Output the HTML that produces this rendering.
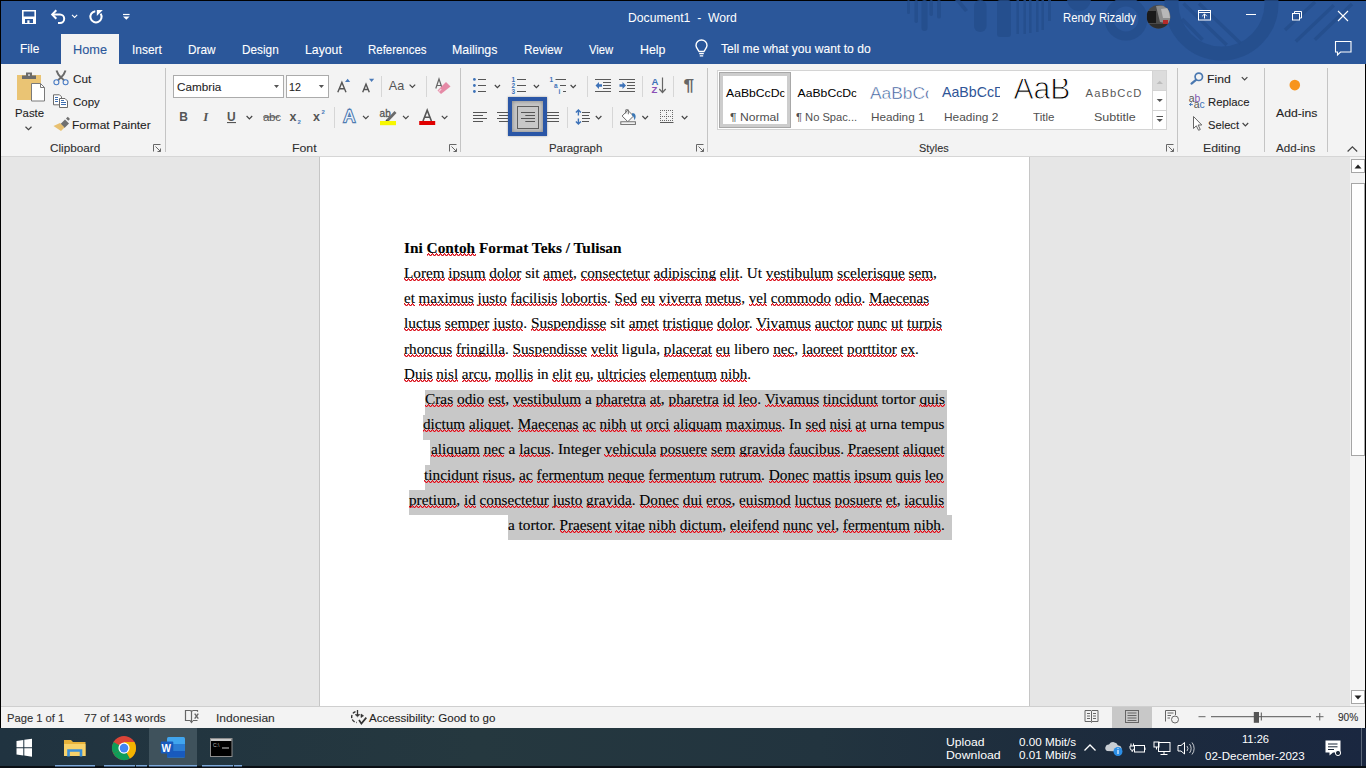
<!DOCTYPE html>
<html><head><meta charset="utf-8">
<style>
*{margin:0;padding:0;box-sizing:border-box}
html,body{width:1366px;height:768px;overflow:hidden;background:#000}
body{position:relative;font-family:"Liberation Sans",sans-serif;font-size:12px;color:#262626}
.a{position:absolute;white-space:nowrap}
#hdr{position:absolute;left:1px;top:1px;width:1365px;height:63px;background:#2b579a;overflow:hidden}
#rib{position:absolute;left:1px;top:64px;width:1364px;height:92px;background:#f3f3f3}
#ribline{position:absolute;left:1px;top:156px;width:1364px;height:1px;background:#d6d6d6}
#docbg{position:absolute;left:1px;top:157px;width:1349px;height:549px;background:#e6e6e6}
#page{position:absolute;left:319px;top:157px;width:711px;height:549px;background:#fff;border-left:1px solid #c6c6c6;border-right:1px solid #c6c6c6}
#vscroll{position:absolute;left:1350px;top:157px;width:15px;height:549px;background:#f3f3f3}
#status{position:absolute;left:1px;top:706px;width:1364px;height:22px;background:#f3f3f3;border-top:1px solid #cfcfcf}
#task{position:absolute;left:0;top:728px;width:1366px;height:40px;background:linear-gradient(90deg,#203340 0%,#25383f 35%,#22343f 60%,#1d2c3d 78%,#1a2740 100%)}
.w{color:#fff}
.dl{position:absolute;font-family:"Liberation Serif",serif;font-size:15px;line-height:20px;white-space:nowrap;color:#000;transform-origin:0 0;-webkit-text-stroke:0.12px #000}
.hb{font-weight:bold}
.lb{position:absolute;font-family:"Liberation Sans",sans-serif;line-height:20px;white-space:nowrap;transform-origin:0 0;-webkit-text-stroke-width:0.1px}
.dl u{text-decoration:none}
</style></head><body>
<div id="hdr"></div>
<div id="rib"></div>
<div id="ribline"></div>
<div id="docbg"></div>
<div id="page"></div>
<div id="vscroll"></div>
<div id="status"></div>
<div id="task"></div>
<!--STRUCT-->
<svg class="a" style="left:0;top:0" width="1366" height="64">
<g fill="#254e8c" fill-opacity="0.85">
 <rect x="907" y="0" width="3" height="14" rx="1.5"/><rect x="914.5" y="0" width="3.5" height="23" rx="1.7"/>
 <rect x="921.5" y="0" width="6" height="31" rx="3"/><rect x="929.5" y="0" width="3.5" height="16" rx="1.7"/>
 <rect x="937" y="0" width="4" height="18.5" rx="2"/>
 <path d="M955 0 L960 0 L968 10 L965 12 Z"/>
 <rect x="974" y="0" width="12.5" height="32" rx="6"/>
 <rect x="997" y="0" width="14" height="37" rx="3"/>
 <rect x="1016.5" y="0" width="2.5" height="34"/><rect x="1023.5" y="0" width="2.5" height="34"/>
 <rect x="1029" y="0" width="2.5" height="33"/><rect x="1036" y="0" width="2.5" height="32"/>
 <rect x="1041.5" y="0" width="2.5" height="30"/><rect x="1048" y="0" width="3" height="21"/>
 <circle cx="1079" cy="-1" r="12"/>
</g>
<g fill="none" stroke="#254e8c" stroke-opacity="0.85">
 <circle cx="1221.5" cy="3.5" r="50" stroke-width="14"/>
 <circle cx="1126" cy="19" r="17" stroke-width="9"/>
 <g stroke-width="3.5">
  <line x1="1182" y1="19" x2="1202.5" y2="39.7"/><line x1="1183.5" y1="3.5" x2="1226.7" y2="44.9"/><line x1="1199" y1="3.5" x2="1240.5" y2="43.2"/>
  <line x1="1295.8" y1="41.5" x2="1333.8" y2="5.2"/><line x1="1314.8" y1="39.7" x2="1352" y2="4"/><line x1="1285" y1="30" x2="1315" y2="2"/>
 </g>
</g>
</svg>
<!-- home tab -->
<div class="a" style="left:61px;top:34px;width:58px;height:30px;background:#f3f3f3"></div>
<!-- font combos -->
<div class="a" style="left:173px;top:75px;width:111px;height:23px;background:#fff;border:1px solid #ababab"></div>
<div class="a" style="left:286px;top:75px;width:43px;height:23px;background:#fff;border:1px solid #ababab"></div>
<!-- focus box on align right -->
<div class="a" style="left:508px;top:97px;width:39px;height:39px;border:4px solid #2a56a6;background:#c6c6c6;box-shadow:0 0 2px rgba(0,0,0,.35)"></div>
<div class="a" style="left:512px;top:101px;width:31px;height:31px;box-shadow:inset 0 0 4px rgba(0,0,0,.35)"></div>
<div class="a" style="left:517px;top:106px;width:22px;height:23px;border:1px solid #5e5e5e;background:#c8c8c8"></div>
<!-- styles gallery -->
<div class="a" style="left:717px;top:70px;width:450px;height:60px;background:#fff;border:1px solid #d4d4d4"></div>
<div class="a" style="left:719px;top:72px;width:72px;height:56px;border:1px solid #a8a8a8;box-shadow:inset 0 0 0 3px #cdcdcd"></div>
<div class="a" style="left:1152px;top:70px;width:15px;height:21px;background:#dcdcdc;border:1px solid #d4d4d4"></div>
<div class="a" style="left:1152px;top:90px;width:15px;height:21px;background:#fff;border:1px solid #d4d4d4"></div>
<div class="a" style="left:1152px;top:110px;width:15px;height:20px;background:#fff;border:1px solid #d4d4d4"></div>
<!-- group separators -->
<div class="a" style="left:165px;top:68px;width:1px;height:84px;background:#c4c4c4"></div>
<div class="a" style="left:460px;top:68px;width:1px;height:84px;background:#c4c4c4"></div>
<div class="a" style="left:707px;top:68px;width:1px;height:84px;background:#c4c4c4"></div>
<div class="a" style="left:1177px;top:68px;width:1px;height:84px;background:#c4c4c4"></div>
<div class="a" style="left:1264px;top:68px;width:1px;height:84px;background:#c4c4c4"></div>
<div class="a" style="left:1327px;top:68px;width:1px;height:84px;background:#c4c4c4"></div>
<!-- small separators -->
<div class="a" style="left:381px;top:76px;width:1px;height:21px;background:#d6d6d6"></div>
<div class="a" style="left:426px;top:76px;width:1px;height:21px;background:#d6d6d6"></div>
<div class="a" style="left:334px;top:107px;width:1px;height:21px;background:#d6d6d6"></div>
<div class="a" style="left:587px;top:76px;width:1px;height:21px;background:#d6d6d6"></div>
<div class="a" style="left:642px;top:76px;width:1px;height:21px;background:#d6d6d6"></div>
<div class="a" style="left:673px;top:76px;width:1px;height:21px;background:#d6d6d6"></div>
<div class="a" style="left:567px;top:107px;width:1px;height:21px;background:#d6d6d6"></div>
<div class="a" style="left:612px;top:107px;width:1px;height:21px;background:#d6d6d6"></div>
<!-- status bar print layout selected -->
<div class="a" style="left:1112px;top:707px;width:40px;height:21px;background:#c8c8c8"></div>
<!-- taskbar word active -->
<div class="a" style="left:149px;top:728px;width:48px;height:38px;background:#3f525c"></div>
<div class="a" style="left:0;top:766px;width:1366px;height:2px;background:#0a0f14"></div>
<div class="a" style="left:1361px;top:728px;width:1px;height:38px;background:#5b6779"></div>

<!--/STRUCT-->
<!--LBL-->
<div class="lb" style="left:628.00px;top:8.00px;font-size:12.25px;color:#ffffff;transform:scaleX(0.9954);-webkit-text-stroke-width:0">Document1 &nbsp;- &nbsp;Word</div>
<div class="lb" style="left:1063.28px;top:8.00px;font-size:12.25px;color:#ffffff;transform:scaleX(0.9244);-webkit-text-stroke-width:0">Rendy Rizaldy</div>
<div class="lb" style="left:19.52px;top:39.30px;font-size:12.25px;color:#ffffff;transform:scaleX(0.9778);">File</div>
<div class="lb" style="left:72.66px;top:39.80px;font-size:12.25px;color:#2b579a;transform:scaleX(1.0419);">Home</div>
<div class="lb" style="left:131.83px;top:39.80px;font-size:12.25px;color:#ffffff;transform:scaleX(0.9733);">Insert</div>
<div class="lb" style="left:188.04px;top:39.80px;font-size:12.25px;color:#ffffff;transform:scaleX(0.9643);">Draw</div>
<div class="lb" style="left:242.04px;top:39.80px;font-size:12.25px;color:#ffffff;transform:scaleX(0.9622);">Design</div>
<div class="lb" style="left:305.00px;top:39.80px;font-size:12.25px;color:#ffffff;transform:scaleX(1.0000);">Layout</div>
<div class="lb" style="left:368.07px;top:39.80px;font-size:12.25px;color:#ffffff;transform:scaleX(0.9344);">References</div>
<div class="lb" style="left:452.39px;top:39.80px;font-size:12.25px;color:#ffffff;transform:scaleX(1.0091);">Mailings</div>
<div class="lb" style="left:523.75px;top:39.80px;font-size:12.25px;color:#ffffff;transform:scaleX(0.9513);">Review</div>
<div class="lb" style="left:588.90px;top:39.80px;font-size:12.25px;color:#ffffff;transform:scaleX(0.9222);">View</div>
<div class="lb" style="left:640.19px;top:39.80px;font-size:12.25px;color:#ffffff;transform:scaleX(1.0125);">Help</div>
<div class="lb" style="left:721.40px;top:39.30px;font-size:12.25px;color:#ffffff;transform:scaleX(0.9901);">Tell me what you want to do</div>
<div class="lb" style="left:14.69px;top:102.50px;font-size:11.25px;color:#1f1f1f;transform:scaleX(1.0111);">Paste</div>
<div class="lb" style="left:72.60px;top:68.70px;font-size:11.0px;color:#1f1f1f;transform:scaleX(1.0647);">Cut</div>
<div class="lb" style="left:72.60px;top:91.60px;font-size:11.0px;color:#1f1f1f;transform:scaleX(1.0423);">Copy</div>
<div class="lb" style="left:71.54px;top:114.70px;font-size:11.25px;color:#1f1f1f;transform:scaleX(1.0575);">Format Painter</div>
<div class="lb" style="left:49.50px;top:137.80px;font-size:11.0px;color:#303030;transform:scaleX(1.0660);">Clipboard</div>
<div class="lb" style="left:176.50px;top:76.90px;font-size:11.75px;color:#1f1f1f;transform:scaleX(0.9977);">Cambria</div>
<div class="lb" style="left:288.89px;top:76.90px;font-size:11.75px;color:#1f1f1f;transform:scaleX(0.9083);">12</div>
<div class="lb" style="left:291.88px;top:137.80px;font-size:11.0px;color:#303030;transform:scaleX(1.1190);">Font</div>
<div class="lb" style="left:549.26px;top:137.80px;font-size:11.0px;color:#303030;transform:scaleX(1.0380);">Paragraph</div>
<div class="lb" style="left:919.11px;top:137.80px;font-size:11.0px;color:#303030;transform:scaleX(0.9897);">Styles</div>
<div class="lb" style="left:1202.58px;top:137.50px;font-size:11.0px;color:#303030;transform:scaleX(1.1219);">Editing</div>
<div class="lb" style="left:1276.20px;top:137.50px;font-size:11.0px;color:#303030;transform:scaleX(1.0541);">Add-ins</div>
<div class="lb" style="left:1275.50px;top:102.70px;font-size:11.0px;color:#1f1f1f;transform:scaleX(1.1108);">Add-ins</div>
<div class="lb" style="left:1207.46px;top:69.00px;font-size:11.75px;color:#1f1f1f;transform:scaleX(1.0381);">Find</div>
<div class="lb" style="left:1207.74px;top:91.90px;font-size:11.75px;color:#1f1f1f;transform:scaleX(0.9643);">Replace</div>
<div class="lb" style="left:1207.53px;top:114.60px;font-size:11.5px;color:#1f1f1f;transform:scaleX(0.9710);">Select</div>
<div class="lb" style="left:730.20px;top:106.50px;font-size:11.0px;color:#505050;transform:scaleX(1.1045);-webkit-text-stroke-width:0">¶ Normal</div>
<div class="lb" style="left:796.20px;top:106.50px;font-size:11.0px;color:#505050;transform:scaleX(1.0133);-webkit-text-stroke-width:0">¶ No Spac...</div>
<div class="lb" style="left:871.43px;top:106.50px;font-size:11.0px;color:#505050;transform:scaleX(1.0653);-webkit-text-stroke-width:0">Heading 1</div>
<div class="lb" style="left:943.52px;top:106.50px;font-size:11.0px;color:#505050;transform:scaleX(1.0837);-webkit-text-stroke-width:0">Heading 2</div>
<div class="lb" style="left:1033.00px;top:106.70px;font-size:11.0px;color:#505050;transform:scaleX(1.0500);-webkit-text-stroke-width:0">Title</div>
<div class="lb" style="left:1093.96px;top:106.70px;font-size:11.0px;color:#505050;transform:scaleX(1.1400);-webkit-text-stroke-width:0">Subtitle</div>
<div class="lb" style="left:6.53px;top:707.50px;font-size:10.5px;color:#303030;transform:scaleX(1.0654);">Page 1 of 1</div>
<div class="lb" style="left:83.51px;top:707.50px;font-size:10.5px;color:#303030;transform:scaleX(1.0919);">77 of 143 words</div>
<div class="lb" style="left:216.16px;top:707.50px;font-size:10.5px;color:#303030;transform:scaleX(1.1440);">Indonesian</div>
<div class="lb" style="left:369.10px;top:707.50px;font-size:10.5px;color:#1f1f1f;transform:scaleX(1.0991);">Accessibility: Good to go</div>
<div class="lb" style="left:1337.60px;top:707.00px;font-size:10.5px;color:#303030;transform:scaleX(0.9619);">90%</div>
<div class="lb" style="left:946.34px;top:732.20px;font-size:11.5px;color:#ffffff;transform:scaleX(1.0571);-webkit-text-stroke-width:0">Upload</div>
<div class="lb" style="left:946.33px;top:745.00px;font-size:11.5px;color:#ffffff;transform:scaleX(1.0680);-webkit-text-stroke-width:0">Download</div>
<div class="lb" style="left:1019.00px;top:732.20px;font-size:11.5px;color:#ffffff;transform:scaleX(1.0161);-webkit-text-stroke-width:0">0.00 Mbit/s</div>
<div class="lb" style="left:1019.00px;top:745.00px;font-size:11.5px;color:#ffffff;transform:scaleX(1.0161);-webkit-text-stroke-width:0">0.01 Mbit/s</div>
<div class="lb" style="left:1241.83px;top:728.80px;font-size:11.5px;color:#ffffff;transform:scaleX(0.9667);-webkit-text-stroke-width:0">11:26</div>
<div class="lb" style="left:1205.20px;top:746.20px;font-size:10.5px;color:#ffffff;transform:scaleX(1.1022);-webkit-text-stroke-width:0">02-December-2023</div>
<!--/LBL-->
<!--DOC-->
<div class="a" style="left:425.0px;top:389.60px;width:522.0px;height:25.13px;background:#c8c8c8"></div>
<div class="a" style="left:423.0px;top:414.73px;width:524.0px;height:25.13px;background:#c8c8c8"></div>
<div class="a" style="left:429.8px;top:439.86px;width:517.2px;height:25.13px;background:#c8c8c8"></div>
<div class="a" style="left:425.0px;top:464.99px;width:522.0px;height:25.13px;background:#c8c8c8"></div>
<div class="a" style="left:409.0px;top:490.12px;width:538.0px;height:25.13px;background:#c8c8c8"></div>
<div class="a" style="left:508.0px;top:515.25px;width:444.0px;height:25.13px;background:#c8c8c8"></div>
<div class="dl hb" style="left:404.48px;top:237.80px;transform:scaleX(1.0212)">Ini <u>Contoh</u> Format Teks / Tulisan</div>
<div class="dl" style="left:403.99px;top:263.00px;transform:scaleX(1.0134)"><u>Lorem</u> <u>ipsum</u> <u>dolor</u> sit <u>amet</u>, <u>consectetur</u> <u>adipiscing</u> <u>elit</u>. Ut <u>vestibulum</u> <u>scelerisque</u> <u>sem</u>,</div>
<div class="dl" style="left:404.00px;top:288.20px;transform:scaleX(1.0027)"><u>et</u> <u>maximus</u> <u>justo</u> <u>facilisis</u> <u>lobortis</u>. <u>Sed</u> <u>eu</u> <u>viverra</u> <u>metus</u>, <u>vel</u> <u>commodo</u> <u>odio</u>. <u>Maecenas</u></div>
<div class="dl" style="left:403.97px;top:313.40px;transform:scaleX(1.0287)"><u>luctus</u> <u>semper</u> <u>justo</u>. <u>Suspendisse</u> sit <u>amet</u> <u>tristique</u> <u>dolor</u>. <u>Vivamus</u> <u>auctor</u> <u>nunc</u> <u>ut</u> <u>turpis</u></div>
<div class="dl" style="left:403.99px;top:338.60px;transform:scaleX(1.0138)"><u>rhoncus</u> <u>fringilla</u>. <u>Suspendisse</u> <u>velit</u> ligula, <u>placerat</u> <u>eu</u> libero <u>nec</u>, <u>laoreet</u> <u>porttitor</u> <u>ex</u>.</div>
<div class="dl" style="left:403.99px;top:363.80px;transform:scaleX(1.0058)"><u>Duis</u> <u>nisl</u> <u>arcu</u>, <u>mollis</u> in <u>elit</u> <u>eu</u>, <u>ultricies</u> <u>elementum</u> <u>nibh</u>.</div>
<div class="dl" style="left:424.98px;top:389.00px;transform:scaleX(1.0237)"><u>Cras</u> <u>odio</u> <u>est</u>, <u>vestibulum</u> a <u>pharetra</u> <u>at</u>, <u>pharetra</u> <u>id</u> <u>leo</u>. <u>Vivamus</u> <u>tincidunt</u> tortor <u>quis</u></div>
<div class="dl" style="left:423.30px;top:414.20px;transform:scaleX(1.0111)"><u>dictum</u> <u>aliquet</u>. <u>Maecenas</u> <u>ac</u> <u>nibh</u> <u>ut</u> <u>orci</u> <u>aliquam</u> <u>maximus</u>. In <u>sed</u> <u>nisi</u> <u>at</u> urna tempus</div>
<div class="dl" style="left:430.60px;top:439.40px;transform:scaleX(1.0126)"><u>aliquam</u> <u>nec</u> a <u>lacus</u>. Integer <u>vehicula</u> <u>posuere</u> <u>sem</u> <u>gravida</u> <u>faucibus</u>. <u>Praesent</u> <u>aliquet</u></div>
<div class="dl" style="left:424.38px;top:464.60px;transform:scaleX(1.0229)"><u>tincidunt</u> <u>risus</u>, <u>ac</u> <u>fermentum</u> <u>neque</u> <u>fermentum</u> <u>rutrum</u>. <u>Donec</u> <u>mattis</u> <u>ipsum</u> <u>quis</u> <u>leo</u></div>
<div class="dl" style="left:409.40px;top:489.80px;transform:scaleX(1.0144)"><u>pretium</u>, <u>id</u> <u>consectetur</u> <u>justo</u> <u>gravida</u>. <u>Donec</u> <u>dui</u> <u>eros</u>, <u>euismod</u> <u>luctus</u> <u>posuere</u> <u>et</u>, <u>iaculis</u></div>
<div class="dl" style="left:508.30px;top:515.00px;transform:scaleX(1.0198)">a tortor. <u>Praesent</u> <u>vitae</u> <u>nibh</u> <u>dictum</u>, <u>eleifend</u> <u>nunc</u> <u>vel</u>, <u>fermentum</u> <u>nibh</u>.</div>
<svg class="a" style="left:0;top:0" width="1366" height="768"><defs><pattern id="zz" patternUnits="userSpaceOnUse" width="4" height="4"><g fill="#d8101a"><rect x="0" y="0" width="1" height="1"/><rect x="1" y="1" width="1" height="1"/><rect x="2" y="2" width="1" height="1"/><rect x="3" y="1" width="1" height="1"/></g><g fill="#e8606a"><rect x="0" y="1" width="1" height="1"/><rect x="1" y="2" width="1" height="1"/><rect x="3" y="2" width="1" height="1"/></g></pattern></defs><g transform="translate(0 253.00)"><rect x="427.0" y="0" width="48.5" height="3" fill="url(#zz)" shape-rendering="crispEdges"/></g><g transform="translate(0 278.00)"><rect x="404.0" y="0" width="40.5" height="3" fill="url(#zz)" shape-rendering="crispEdges"/></g><g transform="translate(0 278.00)"><rect x="448.3" y="0" width="37.2" height="3" fill="url(#zz)" shape-rendering="crispEdges"/></g><g transform="translate(0 278.00)"><rect x="489.3" y="0" width="32.1" height="3" fill="url(#zz)" shape-rendering="crispEdges"/></g><g transform="translate(0 278.00)"><rect x="543.4" y="0" width="29.5" height="3" fill="url(#zz)" shape-rendering="crispEdges"/></g><g transform="translate(0 278.00)"><rect x="580.5" y="0" width="69.2" height="3" fill="url(#zz)" shape-rendering="crispEdges"/></g><g transform="translate(0 278.00)"><rect x="653.5" y="0" width="62.5" height="3" fill="url(#zz)" shape-rendering="crispEdges"/></g><g transform="translate(0 278.00)"><rect x="719.8" y="0" width="19.4" height="3" fill="url(#zz)" shape-rendering="crispEdges"/></g><g transform="translate(0 278.00)"><rect x="765.8" y="0" width="67.6" height="3" fill="url(#zz)" shape-rendering="crispEdges"/></g><g transform="translate(0 278.00)"><rect x="837.2" y="0" width="67.5" height="3" fill="url(#zz)" shape-rendering="crispEdges"/></g><g transform="translate(0 278.00)"><rect x="908.5" y="0" width="24.5" height="3" fill="url(#zz)" shape-rendering="crispEdges"/></g><g transform="translate(0 303.00)"><rect x="404.0" y="0" width="10.9" height="3" fill="url(#zz)" shape-rendering="crispEdges"/></g><g transform="translate(0 303.00)"><rect x="418.6" y="0" width="55.1" height="3" fill="url(#zz)" shape-rendering="crispEdges"/></g><g transform="translate(0 303.00)"><rect x="477.5" y="0" width="29.3" height="3" fill="url(#zz)" shape-rendering="crispEdges"/></g><g transform="translate(0 303.00)"><rect x="510.6" y="0" width="46.8" height="3" fill="url(#zz)" shape-rendering="crispEdges"/></g><g transform="translate(0 303.00)"><rect x="561.1" y="0" width="46.0" height="3" fill="url(#zz)" shape-rendering="crispEdges"/></g><g transform="translate(0 303.00)"><rect x="614.6" y="0" width="22.6" height="3" fill="url(#zz)" shape-rendering="crispEdges"/></g><g transform="translate(0 303.00)"><rect x="640.9" y="0" width="14.2" height="3" fill="url(#zz)" shape-rendering="crispEdges"/></g><g transform="translate(0 303.00)"><rect x="658.9" y="0" width="42.6" height="3" fill="url(#zz)" shape-rendering="crispEdges"/></g><g transform="translate(0 303.00)"><rect x="705.2" y="0" width="35.9" height="3" fill="url(#zz)" shape-rendering="crispEdges"/></g><g transform="translate(0 303.00)"><rect x="748.7" y="0" width="18.4" height="3" fill="url(#zz)" shape-rendering="crispEdges"/></g><g transform="translate(0 303.00)"><rect x="770.8" y="0" width="60.2" height="3" fill="url(#zz)" shape-rendering="crispEdges"/></g><g transform="translate(0 303.00)"><rect x="834.8" y="0" width="26.7" height="3" fill="url(#zz)" shape-rendering="crispEdges"/></g><g transform="translate(0 303.00)"><rect x="869.0" y="0" width="60.1" height="3" fill="url(#zz)" shape-rendering="crispEdges"/></g><g transform="translate(0 328.00)"><rect x="404.0" y="0" width="36.9" height="3" fill="url(#zz)" shape-rendering="crispEdges"/></g><g transform="translate(0 328.00)"><rect x="444.7" y="0" width="44.6" height="3" fill="url(#zz)" shape-rendering="crispEdges"/></g><g transform="translate(0 328.00)"><rect x="493.1" y="0" width="30.0" height="3" fill="url(#zz)" shape-rendering="crispEdges"/></g><g transform="translate(0 328.00)"><rect x="530.9" y="0" width="75.4" height="3" fill="url(#zz)" shape-rendering="crispEdges"/></g><g transform="translate(0 328.00)"><rect x="628.6" y="0" width="30.0" height="3" fill="url(#zz)" shape-rendering="crispEdges"/></g><g transform="translate(0 328.00)"><rect x="662.5" y="0" width="50.6" height="3" fill="url(#zz)" shape-rendering="crispEdges"/></g><g transform="translate(0 328.00)"><rect x="716.9" y="0" width="31.7" height="3" fill="url(#zz)" shape-rendering="crispEdges"/></g><g transform="translate(0 328.00)"><rect x="756.1" y="0" width="54.8" height="3" fill="url(#zz)" shape-rendering="crispEdges"/></g><g transform="translate(0 328.00)"><rect x="814.7" y="0" width="38.6" height="3" fill="url(#zz)" shape-rendering="crispEdges"/></g><g transform="translate(0 328.00)"><rect x="857.2" y="0" width="30.0" height="3" fill="url(#zz)" shape-rendering="crispEdges"/></g><g transform="translate(0 328.00)"><rect x="891.0" y="0" width="12.0" height="3" fill="url(#zz)" shape-rendering="crispEdges"/></g><g transform="translate(0 328.00)"><rect x="906.9" y="0" width="35.2" height="3" fill="url(#zz)" shape-rendering="crispEdges"/></g><g transform="translate(0 354.00)"><rect x="404.0" y="0" width="48.2" height="3" fill="url(#zz)" shape-rendering="crispEdges"/></g><g transform="translate(0 354.00)"><rect x="455.9" y="0" width="49.0" height="3" fill="url(#zz)" shape-rendering="crispEdges"/></g><g transform="translate(0 354.00)"><rect x="512.5" y="0" width="74.4" height="3" fill="url(#zz)" shape-rendering="crispEdges"/></g><g transform="translate(0 354.00)"><rect x="590.7" y="0" width="27.0" height="3" fill="url(#zz)" shape-rendering="crispEdges"/></g><g transform="translate(0 354.00)"><rect x="663.8" y="0" width="48.1" height="3" fill="url(#zz)" shape-rendering="crispEdges"/></g><g transform="translate(0 354.00)"><rect x="715.7" y="0" width="14.4" height="3" fill="url(#zz)" shape-rendering="crispEdges"/></g><g transform="translate(0 354.00)"><rect x="773.2" y="0" width="21.1" height="3" fill="url(#zz)" shape-rendering="crispEdges"/></g><g transform="translate(0 354.00)"><rect x="801.9" y="0" width="41.4" height="3" fill="url(#zz)" shape-rendering="crispEdges"/></g><g transform="translate(0 354.00)"><rect x="847.1" y="0" width="49.9" height="3" fill="url(#zz)" shape-rendering="crispEdges"/></g><g transform="translate(0 354.00)"><rect x="900.7" y="0" width="14.4" height="3" fill="url(#zz)" shape-rendering="crispEdges"/></g><g transform="translate(0 379.00)"><rect x="404.0" y="0" width="28.5" height="3" fill="url(#zz)" shape-rendering="crispEdges"/></g><g transform="translate(0 379.00)"><rect x="436.3" y="0" width="21.8" height="3" fill="url(#zz)" shape-rendering="crispEdges"/></g><g transform="translate(0 379.00)"><rect x="461.8" y="0" width="26.0" height="3" fill="url(#zz)" shape-rendering="crispEdges"/></g><g transform="translate(0 379.00)"><rect x="495.4" y="0" width="37.7" height="3" fill="url(#zz)" shape-rendering="crispEdges"/></g><g transform="translate(0 379.00)"><rect x="552.4" y="0" width="19.3" height="3" fill="url(#zz)" shape-rendering="crispEdges"/></g><g transform="translate(0 379.00)"><rect x="575.4" y="0" width="14.3" height="3" fill="url(#zz)" shape-rendering="crispEdges"/></g><g transform="translate(0 379.00)"><rect x="597.2" y="0" width="48.6" height="3" fill="url(#zz)" shape-rendering="crispEdges"/></g><g transform="translate(0 379.00)"><rect x="649.6" y="0" width="67.0" height="3" fill="url(#zz)" shape-rendering="crispEdges"/></g><g transform="translate(0 379.00)"><rect x="720.4" y="0" width="26.8" height="3" fill="url(#zz)" shape-rendering="crispEdges"/></g><g transform="translate(0 404.00)"><rect x="425.0" y="0" width="28.2" height="3" fill="url(#zz)" shape-rendering="crispEdges"/></g><g transform="translate(0 404.00)"><rect x="457.0" y="0" width="27.3" height="3" fill="url(#zz)" shape-rendering="crispEdges"/></g><g transform="translate(0 404.00)"><rect x="488.1" y="0" width="17.1" height="3" fill="url(#zz)" shape-rendering="crispEdges"/></g><g transform="translate(0 404.00)"><rect x="512.8" y="0" width="68.3" height="3" fill="url(#zz)" shape-rendering="crispEdges"/></g><g transform="translate(0 404.00)"><rect x="595.6" y="0" width="50.3" height="3" fill="url(#zz)" shape-rendering="crispEdges"/></g><g transform="translate(0 404.00)"><rect x="649.8" y="0" width="11.1" height="3" fill="url(#zz)" shape-rendering="crispEdges"/></g><g transform="translate(0 404.00)"><rect x="668.5" y="0" width="50.3" height="3" fill="url(#zz)" shape-rendering="crispEdges"/></g><g transform="translate(0 404.00)"><rect x="722.7" y="0" width="11.9" height="3" fill="url(#zz)" shape-rendering="crispEdges"/></g><g transform="translate(0 404.00)"><rect x="738.4" y="0" width="18.8" height="3" fill="url(#zz)" shape-rendering="crispEdges"/></g><g transform="translate(0 404.00)"><rect x="764.6" y="0" width="54.5" height="3" fill="url(#zz)" shape-rendering="crispEdges"/></g><g transform="translate(0 404.00)"><rect x="823.0" y="0" width="54.6" height="3" fill="url(#zz)" shape-rendering="crispEdges"/></g><g transform="translate(0 404.00)"><rect x="919.4" y="0" width="25.6" height="3" fill="url(#zz)" shape-rendering="crispEdges"/></g><g transform="translate(0 429.00)"><rect x="423.3" y="0" width="42.1" height="3" fill="url(#zz)" shape-rendering="crispEdges"/></g><g transform="translate(0 429.00)"><rect x="469.2" y="0" width="41.3" height="3" fill="url(#zz)" shape-rendering="crispEdges"/></g><g transform="translate(0 429.00)"><rect x="518.1" y="0" width="60.6" height="3" fill="url(#zz)" shape-rendering="crispEdges"/></g><g transform="translate(0 429.00)"><rect x="582.5" y="0" width="13.5" height="3" fill="url(#zz)" shape-rendering="crispEdges"/></g><g transform="translate(0 429.00)"><rect x="599.8" y="0" width="27.0" height="3" fill="url(#zz)" shape-rendering="crispEdges"/></g><g transform="translate(0 429.00)"><rect x="630.5" y="0" width="11.8" height="3" fill="url(#zz)" shape-rendering="crispEdges"/></g><g transform="translate(0 429.00)"><rect x="646.1" y="0" width="23.6" height="3" fill="url(#zz)" shape-rendering="crispEdges"/></g><g transform="translate(0 429.00)"><rect x="673.5" y="0" width="48.9" height="3" fill="url(#zz)" shape-rendering="crispEdges"/></g><g transform="translate(0 429.00)"><rect x="726.2" y="0" width="55.6" height="3" fill="url(#zz)" shape-rendering="crispEdges"/></g><g transform="translate(0 429.00)"><rect x="805.8" y="0" width="20.2" height="3" fill="url(#zz)" shape-rendering="crispEdges"/></g><g transform="translate(0 429.00)"><rect x="829.8" y="0" width="21.9" height="3" fill="url(#zz)" shape-rendering="crispEdges"/></g><g transform="translate(0 429.00)"><rect x="855.5" y="0" width="10.9" height="3" fill="url(#zz)" shape-rendering="crispEdges"/></g><g transform="translate(0 454.00)"><rect x="430.6" y="0" width="48.9" height="3" fill="url(#zz)" shape-rendering="crispEdges"/></g><g transform="translate(0 454.00)"><rect x="483.3" y="0" width="21.1" height="3" fill="url(#zz)" shape-rendering="crispEdges"/></g><g transform="translate(0 454.00)"><rect x="518.8" y="0" width="31.2" height="3" fill="url(#zz)" shape-rendering="crispEdges"/></g><g transform="translate(0 454.00)"><rect x="604.4" y="0" width="51.5" height="3" fill="url(#zz)" shape-rendering="crispEdges"/></g><g transform="translate(0 454.00)"><rect x="659.6" y="0" width="47.2" height="3" fill="url(#zz)" shape-rendering="crispEdges"/></g><g transform="translate(0 454.00)"><rect x="710.7" y="0" width="24.5" height="3" fill="url(#zz)" shape-rendering="crispEdges"/></g><g transform="translate(0 454.00)"><rect x="739.0" y="0" width="45.6" height="3" fill="url(#zz)" shape-rendering="crispEdges"/></g><g transform="translate(0 454.00)"><rect x="788.3" y="0" width="51.5" height="3" fill="url(#zz)" shape-rendering="crispEdges"/></g><g transform="translate(0 454.00)"><rect x="847.4" y="0" width="51.5" height="3" fill="url(#zz)" shape-rendering="crispEdges"/></g><g transform="translate(0 454.00)"><rect x="902.6" y="0" width="41.3" height="3" fill="url(#zz)" shape-rendering="crispEdges"/></g><g transform="translate(0 480.00)"><rect x="424.4" y="0" width="54.5" height="3" fill="url(#zz)" shape-rendering="crispEdges"/></g><g transform="translate(0 480.00)"><rect x="482.8" y="0" width="29.0" height="3" fill="url(#zz)" shape-rendering="crispEdges"/></g><g transform="translate(0 480.00)"><rect x="519.4" y="0" width="13.6" height="3" fill="url(#zz)" shape-rendering="crispEdges"/></g><g transform="translate(0 480.00)"><rect x="536.9" y="0" width="67.3" height="3" fill="url(#zz)" shape-rendering="crispEdges"/></g><g transform="translate(0 480.00)"><rect x="608.0" y="0" width="36.6" height="3" fill="url(#zz)" shape-rendering="crispEdges"/></g><g transform="translate(0 480.00)"><rect x="648.5" y="0" width="67.3" height="3" fill="url(#zz)" shape-rendering="crispEdges"/></g><g transform="translate(0 480.00)"><rect x="719.7" y="0" width="41.8" height="3" fill="url(#zz)" shape-rendering="crispEdges"/></g><g transform="translate(0 480.00)"><rect x="769.1" y="0" width="40.1" height="3" fill="url(#zz)" shape-rendering="crispEdges"/></g><g transform="translate(0 480.00)"><rect x="813.0" y="0" width="37.5" height="3" fill="url(#zz)" shape-rendering="crispEdges"/></g><g transform="translate(0 480.00)"><rect x="854.4" y="0" width="37.5" height="3" fill="url(#zz)" shape-rendering="crispEdges"/></g><g transform="translate(0 480.00)"><rect x="895.7" y="0" width="25.6" height="3" fill="url(#zz)" shape-rendering="crispEdges"/></g><g transform="translate(0 480.00)"><rect x="925.1" y="0" width="18.7" height="3" fill="url(#zz)" shape-rendering="crispEdges"/></g><g transform="translate(0 505.00)"><rect x="409.4" y="0" width="47.3" height="3" fill="url(#zz)" shape-rendering="crispEdges"/></g><g transform="translate(0 505.00)"><rect x="464.3" y="0" width="11.8" height="3" fill="url(#zz)" shape-rendering="crispEdges"/></g><g transform="translate(0 505.00)"><rect x="480.0" y="0" width="69.3" height="3" fill="url(#zz)" shape-rendering="crispEdges"/></g><g transform="translate(0 505.00)"><rect x="553.1" y="0" width="29.6" height="3" fill="url(#zz)" shape-rendering="crispEdges"/></g><g transform="translate(0 505.00)"><rect x="586.5" y="0" width="45.6" height="3" fill="url(#zz)" shape-rendering="crispEdges"/></g><g transform="translate(0 505.00)"><rect x="639.7" y="0" width="39.7" height="3" fill="url(#zz)" shape-rendering="crispEdges"/></g><g transform="translate(0 505.00)"><rect x="683.2" y="0" width="19.4" height="3" fill="url(#zz)" shape-rendering="crispEdges"/></g><g transform="translate(0 505.00)"><rect x="706.5" y="0" width="25.4" height="3" fill="url(#zz)" shape-rendering="crispEdges"/></g><g transform="translate(0 505.00)"><rect x="739.5" y="0" width="51.6" height="3" fill="url(#zz)" shape-rendering="crispEdges"/></g><g transform="translate(0 505.00)"><rect x="794.8" y="0" width="36.4" height="3" fill="url(#zz)" shape-rendering="crispEdges"/></g><g transform="translate(0 505.00)"><rect x="835.0" y="0" width="47.3" height="3" fill="url(#zz)" shape-rendering="crispEdges"/></g><g transform="translate(0 505.00)"><rect x="886.1" y="0" width="11.0" height="3" fill="url(#zz)" shape-rendering="crispEdges"/></g><g transform="translate(0 505.00)"><rect x="904.7" y="0" width="39.7" height="3" fill="url(#zz)" shape-rendering="crispEdges"/></g><g transform="translate(0 530.00)"><rect x="559.7" y="0" width="51.8" height="3" fill="url(#zz)" shape-rendering="crispEdges"/></g><g transform="translate(0 530.00)"><rect x="615.4" y="0" width="29.7" height="3" fill="url(#zz)" shape-rendering="crispEdges"/></g><g transform="translate(0 530.00)"><rect x="648.9" y="0" width="27.2" height="3" fill="url(#zz)" shape-rendering="crispEdges"/></g><g transform="translate(0 530.00)"><rect x="679.9" y="0" width="42.5" height="3" fill="url(#zz)" shape-rendering="crispEdges"/></g><g transform="translate(0 530.00)"><rect x="730.1" y="0" width="49.3" height="3" fill="url(#zz)" shape-rendering="crispEdges"/></g><g transform="translate(0 530.00)"><rect x="783.2" y="0" width="29.7" height="3" fill="url(#zz)" shape-rendering="crispEdges"/></g><g transform="translate(0 530.00)"><rect x="816.8" y="0" width="18.7" height="3" fill="url(#zz)" shape-rendering="crispEdges"/></g><g transform="translate(0 530.00)"><rect x="843.1" y="0" width="67.1" height="3" fill="url(#zz)" shape-rendering="crispEdges"/></g><g transform="translate(0 530.00)"><rect x="914.0" y="0" width="27.2" height="3" fill="url(#zz)" shape-rendering="crispEdges"/></g></svg>
<!--/DOC-->
<!--ICONS-->
<svg class="a" style="left:0;top:0" width="1366" height="768" viewBox="0 0 1366 768" font-family="Liberation Sans, sans-serif">
<!-- ===== quick access toolbar ===== -->
<g fill="none" stroke="#fff" stroke-width="1.5">
 <!-- save -->
 <path d="M22.8 10.8 H35.2 V23.2 H22.8 Z" stroke-width="1.6"/>
 <!-- undo -->
 <path d="M53 14.5 H60 A4.2 4.2 0 0 1 60 22.9 H58" stroke-width="2"/>
 <path d="M56.3 10.3 L52.2 14.5 L56.3 18.7" stroke-width="2"/>
 <path d="M72 14.8 L74.6 17.4 L77.2 14.8" stroke-width="1.1"/>
 <!-- redo (circular) -->
 <path d="M95.3 11.2 A5.6 5.6 0 1 0 100.6 13.6" stroke-width="2"/>
 <path d="M96.8 10 H102.8 L96.8 16 Z" fill="#fff" stroke="none"/>
</g>
<path d="M22 16.5 H36 V24 H22 Z" fill="#fff"/>
<rect x="25" y="19" width="8" height="4" fill="#2b579a"/>
<rect x="27.3" y="20.3" width="2.2" height="2.7" fill="#fff"/>
<path d="M123 14.5 H129.6" stroke="#fff" stroke-width="1.2"/>
<path d="M123 16.5 L129.6 16.5 L126.3 19.8 Z" fill="#fff"/>
<!-- ===== title right ===== -->
<clipPath id="av"><circle cx="1158.5" cy="16.7" r="11.8"/></clipPath>
<g clip-path="url(#av)">
<rect x="1146" y="4" width="25" height="25" fill="#4a4a4a"/>
<path d="M1156 6 L1166 5 L1171 12 L1171 24 L1160 22 Z" fill="#8c8c8c"/>
<path d="M1161 9 L1168 8 L1170 18 L1163 18 Z" fill="#b8b8b8"/>
<rect x="1147" y="11" width="9" height="12" fill="#1a1a1a"/>
<rect x="1163" y="20" width="5" height="4" fill="#b52a2a"/>
<rect x="1146" y="24" width="25" height="6" fill="#2e2e2e"/>
</g>
<g fill="none" stroke="#fff" stroke-width="1">
 <rect x="1198.5" y="10.5" width="12" height="9.5"/>
 <path d="M1198.5 12.5 H1210.5"/>
 <path d="M1204.5 18.5 V14 M1202.2 16.2 L1204.5 13.9 L1206.8 16.2"/>
 <path d="M1246 14.5 H1256"/>
 <rect x="1292.5" y="13.5" width="7" height="6.5"/>
 <path d="M1294.5 13.5 V11.5 H1301.5 V18 H1299.5"/>
 <path d="M1338 11 L1348 21 M1348 11 L1338 21" stroke-width="1.1"/>
 <path d="M1335.5 41.5 H1351 V52 H1340.5 L1337.5 55 V52 H1335.5 Z" stroke-width="1.1"/>
 <!-- bulb -->
 <path d="M699 51.5 C697.5 49 696 47.5 696 45.5 A5.5 5.5 0 0 1 707 45.5 C707 47.5 705.5 49 704 51.5 Z" stroke-width="1.4"/>
 <path d="M699.2 53.6 H703.8 M699.8 55.8 H703.2" stroke-width="1.3"/>
</g>
<!-- ===== clipboard ===== -->
<rect x="17" y="75" width="24" height="25" fill="#eac474"/>
<rect x="22" y="75.5" width="14" height="3.5" fill="#6b6b6b"/>
<rect x="26" y="72.5" width="6" height="4" fill="#6b6b6b"/>
<circle cx="29" cy="75" r="1" fill="#d8d8d8"/>
<path d="M31.5 83.5 H40.5 L44.5 87.5 V101 H31.5 Z" fill="#fff" stroke="#7a7a7a"/>
<path d="M40.5 83.5 V87.5 H44.5" fill="none" stroke="#7a7a7a"/>
<path d="M25.5 126.8 L28.5 129.6 L31.5 126.8" fill="none" stroke="#444" stroke-width="1.2"/>
<!-- cut -->
<path d="M56.5 70.5 Q58 75 61 77.5 Q63.5 79.5 64 80.5 M65.5 70.5 Q64 75 61 77.5 Q58.5 79.5 58 80.5" fill="none" stroke="#6a6a6a" stroke-width="2"/>
<circle cx="56.4" cy="82.3" r="2.5" fill="none" stroke="#4a7cc4" stroke-width="1.1"/>
<circle cx="65.6" cy="82.3" r="2.5" fill="none" stroke="#4a7cc4" stroke-width="1.1"/>
<!-- copy -->
<path d="M53.5 94.8 H59.5 L61.5 96.8 V104.8 H53.5 Z" fill="#fff" stroke="#6a6a6a"/>
<g fill="#3f6fb0" shape-rendering="crispEdges"><rect x="55" y="97" width="3" height="1"/><rect x="55" y="99" width="3" height="1"/><rect x="55" y="101" width="3" height="1"/></g>
<path d="M59.5 98.5 H65 L67.5 101 V107.5 H59.5 Z" fill="#fff" stroke="#6a6a6a"/>
<g fill="#3f6fb0" shape-rendering="crispEdges"><rect x="61" y="100" width="3" height="1"/><rect x="61" y="102" width="5" height="1"/><rect x="61" y="104" width="5" height="1"/></g>
<!-- format painter -->
<path d="M60.5 124 L65 119.5 L69 123.5 L64.5 128 Z" fill="#707070"/>
<path d="M66 118.5 L67.8 116.8 L70 119 L68.3 120.8 Z" fill="#707070"/>
<path d="M53.5 126 L60 123 L64.5 127.5 L61 131 Z" fill="#e8c070"/>
<!-- dialog launchers -->
<g fill="none" stroke="#666" stroke-width="1">
 <path d="M153.5 151.5 V144.5 H160.5 M155.5 146.5 L160.5 151.5 M157.5 151.5 H160.5 V148.5"/>
 <path d="M449.5 151.5 V144.5 H456.5 M451.5 146.5 L456.5 151.5 M453.5 151.5 H456.5 V148.5"/>
 <path d="M696.5 151.5 V144.5 H703.5 M698.5 146.5 L703.5 151.5 M700.5 151.5 H703.5 V148.5"/>
 <path d="M1166.5 151.5 V144.5 H1173.5 M1168.5 146.5 L1173.5 151.5 M1170.5 151.5 H1173.5 V148.5"/>
</g>
<!-- ===== font group ===== -->
<path d="M274 85 H279 L276.5 88 Z M318.8 85 H324 L321.4 88 Z" fill="#555"/>
<g fill="none" stroke="#555" stroke-width="1.4">
 <path d="M337.8 92.2 L341.9 82.4 L346 92.2 M339.4 88.8 H344.4"/>
 <path d="M362.7 92.2 L366 84.2 L369.3 92.2 M364 89.5 H368"/>
</g>
<path d="M345 82 L347.6 78.8 L350.2 82 Z" fill="#4a7ab8"/>
<path d="M369 78.8 H374.2 L371.6 82 Z" fill="#4a7ab8"/>
<text x="388.8" y="90.2" font-size="12.6" fill="#555">Aa</text>
<g fill="none" stroke="#444" stroke-width="1.2">
 <path d="M409.6 84.6 L412.4 87.4 L415.2 84.6"/>
 <path d="M246.6 116 L249.4 118.8 L252.2 116"/>
 <path d="M363 115.8 L365.8 118.6 L368.6 115.8"/>
 <path d="M403 115.8 L405.8 118.6 L408.6 115.8"/>
 <path d="M441.8 115.8 L444.6 118.6 L447.4 115.8"/>
</g>
<!-- clear formatting -->
<path d="M435.8 88.5 L439 79 L442.2 88.5 M436.8 85.5 H441.2" fill="none" stroke="#666" stroke-width="1.2"/>
<path d="M441 94 L437.5 90.5 L446 82 L450.5 86.5 Z" fill="#e58aa6"/>
<path d="M438.6 91.6 L441.2 89" stroke="#f6d0dc" stroke-width="1.2"/>
<!-- B I U abc x2 x2 -->
<text x="179.3" y="120.9" font-size="12" font-weight="bold" fill="#555">B</text>
<text x="203.2" y="120.9" font-size="12.8" font-style="italic" font-weight="bold" font-family="Liberation Serif, serif" fill="#555">I</text>
<text x="227" y="120.9" font-size="12" font-weight="bold" fill="#555">U</text>
<rect x="227" y="122" width="9" height="1.1" fill="#555"/>
<text x="263" y="120.9" font-size="11.5" fill="#555" letter-spacing="-0.3">abc</text>
<rect x="263" y="116.5" width="16" height="1" fill="#555"/>
<text x="289.5" y="120.9" font-size="12.5" font-weight="bold" fill="#555">x</text>
<text x="297.5" y="123.5" font-size="6" font-weight="bold" fill="#4a7ab8">2</text>
<text x="313" y="120.9" font-size="12.5" font-weight="bold" fill="#555">x</text>
<text x="321.5" y="114" font-size="6" font-weight="bold" fill="#4a7ab8">2</text>
<!-- text effects -->
<text x="344" y="122.3" font-size="16" fill="#eef4fb" stroke="#4f7bb0" stroke-width="2.3" paint-order="stroke">A</text>
<!-- highlight -->
<text x="379.6" y="116.6" font-size="10" fill="#555" stroke="#555" stroke-width=".3">ab</text>
<path d="M386 120 L394.5 111 L396.5 113 L388 122 Z" fill="#6a6a6a"/>
<path d="M385 121.5 L386.5 119.5 L388 121 Z" fill="#444"/>
<rect x="380" y="121" width="16" height="4.2" fill="#f7f700"/>
<!-- font color -->
<path d="M423 121 L427.2 110.2 L431.4 121 M424.6 117.2 H429.8" fill="none" stroke="#555" stroke-width="1.6"/>
<rect x="419.2" y="121" width="16" height="4" fill="#e00000"/>
<!-- ===== paragraph ===== -->
<g fill="#3d72b8">
 <circle cx="474.4" cy="79.4" r="1.4"/><circle cx="474.4" cy="85.5" r="1.4"/><circle cx="474.4" cy="91.5" r="1.4"/>
</g>
<g stroke="#555" stroke-width="1">
 <path d="M478 79.5 H486 M478 85.5 H486 M478 91.5 H486"/>
 <path d="M517 79.5 H526 M517 85.5 H526 M517 91.5 H526"/>
 <path d="M555.5 79.5 H566 M560 85.5 H566 M563 91.5 H566"/>
</g>
<g font-size="6.5" font-weight="bold" fill="#3d72b8">
 <text x="511.5" y="82">1</text><text x="511.5" y="88.2">2</text><text x="511.5" y="94.2">3</text>
 <text x="549.5" y="82">1</text><text x="554" y="88.2">a</text><text x="558.5" y="94.2">i</text>
</g>
<g fill="none" stroke="#444" stroke-width="1.2">
 <path d="M494.8 85 L497.4 87.6 L500 85"/>
 <path d="M533.8 85 L536.4 87.6 L539 85"/>
 <path d="M570.6 85 L573.2 87.6 L575.8 85"/>
 <path d="M595.8 116 L598.6 118.8 L601.4 116"/>
 <path d="M642.4 116 L645.2 118.8 L648 116"/>
 <path d="M681.8 116 L684.6 118.8 L687.4 116"/>
</g>
<!-- indents -->
<g stroke="#5a5a5a" stroke-width="1">
 <path d="M595 79.5 H611 M603 82.5 H611 M603 85.5 H611 M603 88.5 H611 M595 91.5 H611"/>
 <path d="M619 79.5 H635 M627 82.5 H635 M627 85.5 H635 M627 88.5 H635 M619 91.5 H635"/>
</g>
<path d="M595.5 85.5 L599 82 V84.3 H602 V86.7 H599 V89 Z" fill="#3d72b8"/>
<path d="M626 85.5 L622.5 82 V84.3 H619.5 V86.7 H622.5 V89 Z" fill="#3d72b8"/>
<!-- sort -->
<text x="651.4" y="85.2" font-size="9.6" font-weight="bold" fill="#3d72b8">A</text>
<text x="651.6" y="93.4" font-size="9.6" font-weight="bold" fill="#8a4fb5">Z</text>
<path d="M662.5 77.5 V92.5 M659.3 89 L662.5 92.5 L665.7 89" fill="none" stroke="#666" stroke-width="1.2"/>
<!-- pilcrow -->
<text x="683.6" y="91" font-size="16" font-weight="bold" fill="#666" textLength="10.6" lengthAdjust="spacingAndGlyphs">¶</text>
<!-- alignment -->
<g stroke="#555" stroke-width="1.15">
 <path d="M473 112.5 H487 M473 115.5 H483 M473 118.5 H487 M473 121.5 H483"/>
 <path d="M497 112.5 H508 M499 115.5 H508 M497 118.5 H508 M499 121.5 H508"/>
 <path d="M521 112.5 H535 M525.3 115.5 H535 M521 118.5 H535 M525.3 121.5 H535"/>
 <path d="M547 112.5 H559 M547 115.5 H559 M547 118.5 H559 M547 121.5 H559"/>
 <path d="M582 112.5 H590 M582 115.5 H589 M582 118.5 H590 M582 121.5 H589"/>
</g>
<path d="M578.4 110 V115.5 M578.4 118.5 V124 M575.9 112.5 L578.4 110 L580.9 112.5 M575.9 121.5 L578.4 124 L580.9 121.5" fill="none" stroke="#3d72b8" stroke-width="1.4"/>
<!-- shading -->
<path d="M627.8 110.3 L633.5 116 L627.8 121.7 L622.1 116 Z" fill="#fff" stroke="#6a6a6a" stroke-width="1"/>
<path d="M625.8 113.5 V109.8 H628.3 V114.3" fill="none" stroke="#6a6a6a" stroke-width="1"/>
<path d="M632.3 113 C635.5 113 636.8 116.5 634.5 120.2 C634 117.5 633.5 116 631.8 115.2 Z" fill="#3b77b5"/>
<rect x="620.8" y="121.8" width="14.6" height="2.6" fill="#fff" stroke="#6a6a6a" stroke-width="1"/>
<!-- borders -->
<g fill="#6a6a6a">
 
</g>
<defs>
 <pattern id="dth" patternUnits="userSpaceOnUse" x="0" y="0" width="2" height="2"><rect x="0" y="0" width="1" height="1" fill="#6a6a6a"/></pattern>
</defs>
<g shape-rendering="crispEdges">
 <rect x="660" y="110" width="14" height="1" fill="url(#dth)"/>
 <rect x="660" y="116" width="14" height="1" fill="url(#dth)"/>
 <rect x="660" y="110" width="1" height="12" fill="url(#dth)"/>
 <rect x="666" y="110" width="1" height="12" fill="url(#dth)"/>
 <rect x="672" y="110" width="1" height="12" fill="url(#dth)"/>
 <rect x="660" y="120" width="14" height="1" fill="url(#dth)"/>
</g>
<path d="M660 122.5 H673.5" stroke="#5a5a5a" stroke-width="1"/>
<!-- ===== styles ===== -->
<svg x="724" y="76" width="60.4" height="30"><text x="2" y="20.6" font-size="11.4" fill="#000" textLength="59.6" lengthAdjust="spacingAndGlyphs">AaBbCcDc</text></svg>
<svg x="795" y="76" width="61.4" height="30"><text x="2.6" y="20.6" font-size="11.4" fill="#000" textLength="59.6" lengthAdjust="spacingAndGlyphs">AaBbCcDc</text></svg>
<svg x="866" y="76" width="62.2" height="30"><text x="4" y="22.7" font-size="17.4" fill="#2f5597" stroke="#fff" stroke-width=".5">AaBbCc</text></svg>
<svg x="938" y="76" width="62" height="30"><text x="4" y="20.6" font-size="14.2" fill="#2f5597">AaBbCcD</text></svg>
<svg x="1005" y="79" width="75" height="30"><text x="8.4" y="19.7" font-size="31.5" fill="#000" stroke="#fff" stroke-width="1" textLength="57" lengthAdjust="spacingAndGlyphs">AaB</text></svg>
<svg x="1080" y="76" width="65" height="30"><text x="5.6" y="21" font-size="11.2" fill="#595959" letter-spacing="1.1">AaBbCcD</text></svg>
<path d="M1156.7 99 H1162.8 L1159.75 102 Z" fill="#555"/>
<path d="M1156.5 116.5 H1163" stroke="#555"/>
<path d="M1156.7 119 H1162.8 L1159.75 122 Z" fill="#555"/>
<path d="M1156.5 84 L1159.75 80.8 L1163 84 Z" fill="#bdbdbd"/>
<!-- ===== editing ===== -->
<circle cx="1198.8" cy="76.8" r="3.7" fill="none" stroke="#4a78b0" stroke-width="1.7"/>
<path d="M1196 79.8 L1191.5 83.6" stroke="#4a78b0" stroke-width="2.2" stroke-linecap="round"/>
<g fill="none" stroke="#444" stroke-width="1.2">
 <path d="M1241.8 77.2 L1244.6 80 L1247.4 77.2"/>
 <path d="M1242.6 123 L1245.4 125.8 L1248.2 123"/>
 <path d="M1347.6 151.5 L1352.4 146.8 L1357.2 151.5"/>
</g>
<text x="1188.8" y="101.6" font-size="10.4" fill="#555">a<tspan fill="#8257b0">b</tspan></text>
<text x="1193.8" y="107.8" font-size="10.4" fill="#555">a<tspan fill="#3d72b8">c</tspan></text>
<path d="M1191.5 102.5 L1189.8 104.6 H1192.8 M1190.6 103.4 L1189.6 104.6 L1190.8 105.8" fill="none" stroke="#3d72b8" stroke-width="1"/>
<path d="M1193.5 116.5 V128.5 L1196.3 125.8 L1198.6 130.3 L1200.3 129.5 L1198.1 125 H1201.8 Z" fill="#fff" stroke="#666" stroke-width="1"/>
<circle cx="1294.8" cy="85.1" r="5.3" fill="#f7941d"/>
<!-- ===== vertical scrollbar ===== -->
<rect x="1351.5" y="159.5" width="13" height="13" fill="#fff" stroke="#a6a6a6"/>
<path d="M1354.5 168.5 H1361.5 L1358 164.5 Z" fill="#222"/>
<rect x="1351.5" y="183.5" width="13" height="272" fill="#fff" stroke="#a6a6a6"/>
<rect x="1351.5" y="690.5" width="13" height="13" fill="#fff" stroke="#a6a6a6"/>
<path d="M1354.5 695.5 H1361.5 L1358 699.5 Z" fill="#222"/>
<!-- ===== status bar icons ===== -->
<g fill="none" stroke="#666" stroke-width="1">
 <path d="M190.5 710.5 H185.5 V720.5 H190.5 M193 710.5 H197.5 V711.8 M193 720.5 H197.5 M191.5 711.5 V722 M190.5 710.5 L191.5 711.5 L192.8 710.5" stroke-width="1.2"/>
 <path d="M190.2 720.8 L191.5 722.6 L192.8 720.8" stroke-width="1.1"/>
 <path d="M194.7 713.6 L198.3 718.6 M198.3 713.6 L194.7 718.6" stroke-width="1.4"/>
 <!-- accessibility -->
 <path d="M355.5 711.6 A5.6 5.6 0 0 0 356.8 722.5" stroke="#333" stroke-width="1.4" stroke-dasharray="3.2 1.6"/>
 <path d="M357.5 710 V715.8" stroke="#333" stroke-width="1.3"/>
 <path d="M355.2 714.6 L357.5 716.8 L359.8 714.6 Z" fill="#333" stroke="#333" stroke-width=".6"/>
 <path d="M361 714 L363.6 715.8 L361 717.6 Z" fill="#333" stroke="#333" stroke-width=".6"/>
 <path d="M359 720 L361.4 723.6 L366.3 717.6" stroke="#333" stroke-width="1.7"/>
 <!-- read mode -->
 <path d="M1085 710.5 H1091 L1091.5 711.5 L1092 710.5 H1098 V721.5 H1092 L1091.5 722.5 L1091 721.5 H1085 Z"/>
 <path d="M1087 713.5 H1090 M1087 716 H1090 M1087 718.5 H1090 M1093 713.5 H1096 M1093 716 H1096 M1093 718.5 H1096"/>
 <path d="M1091.5 711.5 V721.5"/>
 <!-- print layout -->
 <rect x="1125.5" y="710.5" width="13" height="12"/>
 <path d="M1127.5 713 H1136.5 M1127.5 715.5 H1136.5 M1127.5 718 H1136.5 M1127.5 720.5 H1136.5"/>
 <!-- web layout -->
 <path d="M1165.5 721.5 V710.5 H1175.5 V715"/>
 <path d="M1167.5 713 H1173.5 M1167.5 715.5 H1171 M1167.5 718 H1170"/>
 <circle cx="1175" cy="719.5" r="3.5"/>
 <path d="M1198.5 716.7 H1205.5 M1316 716.7 H1323.5 M1319.75 713 V720.5"/>
</g>
<rect x="1211" y="716.2" width="100" height="1" fill="#555"/>
<rect x="1253.8" y="712" width="5.2" height="10.8" fill="#555"/>
<rect x="1260.8" y="712.5" width="1" height="8" fill="#555"/>
<!-- ===== taskbar ===== -->
<path d="M16.5 741 L23.3 740 V747.2 H16.5 Z M24.3 739.8 L32 738.7 V747.2 H24.3 Z M16.5 748.2 H23.3 V755.4 L16.5 754.5 Z M24.3 748.2 H32 V756.7 L24.3 755.6 Z" fill="#fff"/>
<!-- explorer -->
<path d="M64 740 H71 L73 742 H85.5 V756 H64 Z" fill="#e8b23a"/>
<path d="M64 744 H85.5 V756 H64 Z" fill="#f8d26a"/>
<path d="M68.5 756.5 V750.5 H81 V756.5" fill="none" stroke="#3b8fd8" stroke-width="2.6"/>
<!-- chrome -->
<circle cx="124" cy="748.1" r="12" fill="#db4437"/>
<path d="M124 748.1 L113.6 754.1 A12 12 0 0 0 130 758.5 Z" fill="#0f9d58"/>
<path d="M124 748.1 L130 758.5 A12 12 0 0 0 134.4 742.1 L124 742.1 Z" fill="#f4b400"/>
<path d="M124 748.1 L113.6 754.1 A12 12 0 0 1 113.6 742.1 Z" fill="#0f9d58"/>
<circle cx="124" cy="748.1" r="5.6" fill="#fff"/>
<circle cx="124" cy="748.1" r="4.3" fill="#4285f4"/>
<!-- word -->
<rect x="167" y="737" width="18" height="20.5" rx="1.5" fill="#41a5ee"/>
<rect x="167" y="744" width="18" height="7" fill="#2b7cd3"/>
<rect x="167" y="751" width="18" height="6.5" fill="#185abd"/>
<rect x="160.8" y="741.5" width="12.5" height="12" rx="1" fill="#185abd"/>
<text x="161.6" y="751.7" font-size="10" font-weight="bold" fill="#fff">W</text>
<!-- cmd -->
<rect x="210.5" y="738.5" width="21.5" height="18" fill="#000" stroke="#8d8d8d"/>
<rect x="211" y="739" width="20.5" height="2" fill="#c9c9c9"/>
<text x="213" y="746.5" font-size="5" fill="#bbb">C:\</text>
<path d="M222 748 H229" stroke="#ccc" stroke-width="1"/>
<!-- indicators -->
<g fill="#7aa6d8">
 <rect x="55" y="765" width="40" height="1.5"/>
 <rect x="104" y="765" width="31" height="1.5"/><rect x="136" y="765" width="11" height="1.5"/>
 <rect x="149" y="765" width="48" height="1.5"/>
 <rect x="202" y="765" width="31" height="1.5"/><rect x="234" y="765" width="8" height="1.5"/>
</g>
<!-- tray -->
<path d="M1084.5 750.5 L1090 745 L1095.5 750.5" fill="none" stroke="#fff" stroke-width="1.3"/>
<path d="M1107 751 A3.5 3.5 0 0 1 1109 744.5 A5 5 0 0 1 1118 745.5 A3 3 0 0 1 1119 751.5 Z" fill="#c8cdd3"/>
<circle cx="1118" cy="751.5" r="4.5" fill="#2b8ee6"/>
<path d="M1118 750 V754" stroke="#fff" stroke-width="1.1"/>
<circle cx="1118" cy="748.6" r=".6" fill="#fff"/>
<g fill="none" stroke="#fff" stroke-width="1">
 <path d="M1131 743.5 V746 M1133.5 743.5 V746 M1130 746 H1134.5 V748 A2.2 2.2 0 0 1 1130 748 Z M1132.2 750 V752"/>
 <rect x="1134.5" y="745.5" width="10" height="6.5"/>
 <path d="M1145 747.5 V750"/>
 <rect x="1158.5" y="742.5" width="11.5" height="9"/>
 <path d="M1164 751.5 V754.2 M1160.5 754.5 H1167.5"/>
 <rect x="1154" y="742" width="5" height="5"/>
 <path d="M1156.5 747 V749.5"/>
 <path d="M1178 745.5 H1181 L1184.5 742.5 V754 L1181 751 H1178 Z"/>
 <path d="M1187 746 A4 4 0 0 1 1187 751 M1189.5 744 A7 7 0 0 1 1189.5 753 M1192 742.5 A9.5 9.5 0 0 1 1192 754.5" stroke-opacity=".75"/>
</g>
<path d="M1325.5 740.5 H1340.5 V752.5 H1333 L1329.5 755.5 V752.5 H1325.5 Z" fill="#fff"/>
<path d="M1328 744 H1337.5 M1328 746.8 H1337.5 M1328 749.5 H1334" stroke="#1b2738" stroke-width="1"/>
<circle cx="1338" cy="753" r="2.6" fill="#1b2738" stroke="#fff" stroke-width="1"/>
</svg>

<!--/ICONS-->


</body></html>
